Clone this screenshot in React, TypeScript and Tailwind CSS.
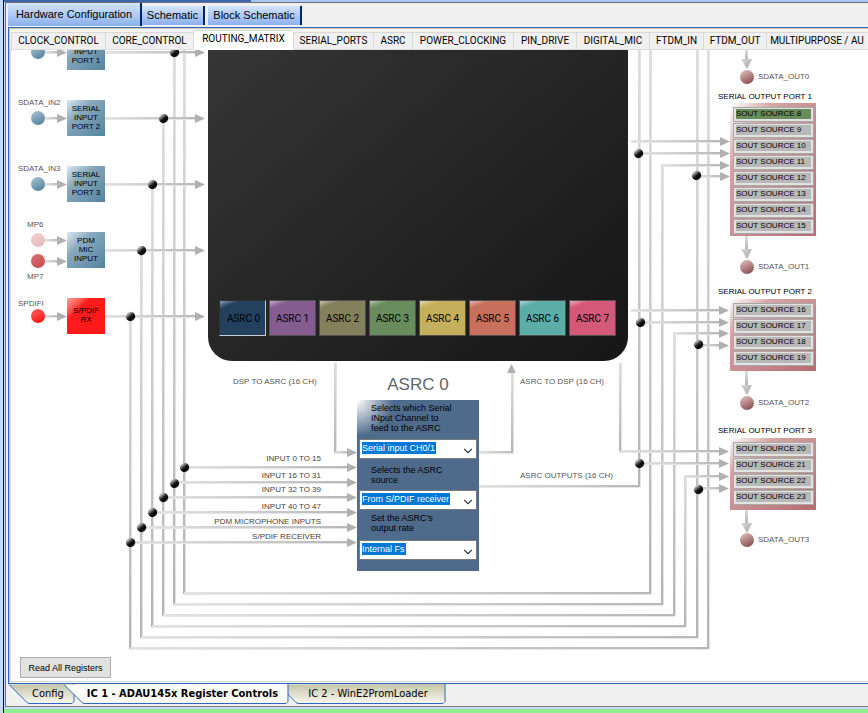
import { useState } from 'react'
import { ChevronDown } from 'lucide-react'
import clsx from 'clsx'

const topTabs = ['Hardware Configuration', 'Schematic', 'Block Schematic']

const pageTabs = [
  { name: 'CLOCK_CONTROL', width: 'w-[94px]' },
  { name: 'CORE_CONTROL', width: 'w-[88px]' },
  { name: 'ROUTING_MATRIX', width: 'w-[100px]' },
  { name: 'SERIAL_PORTS', width: 'w-[80px]' },
  { name: 'ASRC', width: 'w-[39px]' },
  { name: 'POWER_CLOCKING', width: 'w-[101px]' },
  { name: 'PIN_DRIVE', width: 'w-[63px]' },
  { name: 'DIGITAL_MIC', width: 'w-[73px]' },
  { name: 'FTDM_IN', width: 'w-[54px]' },
  { name: 'FTDM_OUT', width: 'w-[63px]' },
  { name: 'MULTIPURPOSE / AU', width: 'w-[101px]' }
]

const chipTabs = [
  { name: 'Config', width: 66 },
  { name: 'IC 1 - ADAU145x Register Controls', width: 225 },
  { name: 'IC 2 - WinE2PromLoader', width: 168 }
]

const inputs = [
  { lines: ['SERIAL', 'INPUT', 'PORT 1'], y: 34, red: false },
  { lines: ['SERIAL', 'INPUT', 'PORT 2'], y: 100, red: false },
  { lines: ['SERIAL', 'INPUT', 'PORT 3'], y: 166, red: false },
  { lines: ['PDM', 'MIC', 'INPUT'], y: 232, red: false },
  { lines: ['S/PDIF', 'RX'], y: 298, red: true }
]

const labels = [
  { text: 'SDATA_IN2', x: 18, y: 97 },
  { text: 'SDATA_IN3', x: 18, y: 163 },
  { text: 'MP6', x: 27, y: 219 },
  { text: 'MP7', x: 27, y: 271 },
  { text: 'SPDIFI', x: 18, y: 298 },
  { text: 'SDATA_OUT0', x: 758, y: 71 },
  { text: 'SDATA_OUT1', x: 758, y: 261 },
  { text: 'SDATA_OUT2', x: 758, y: 397 },
  { text: 'SDATA_OUT3', x: 758, y: 534 },
  { text: 'DSP TO ASRC (16 CH)', x: 233, y: 376 },
  { text: 'ASRC TO DSP (16 CH)', x: 520, y: 376 },
  { text: 'ASRC OUTPUTS (16 CH)', x: 520, y: 470 }
]

const sourceLabels = [
  { text: 'INPUT 0 TO 15', y: 453 },
  { text: 'INPUT 16 TO 31', y: 470 },
  { text: 'INPUT 32 TO 39', y: 484 },
  { text: 'INPUT 40 TO 47', y: 501 },
  { text: 'PDM MICROPHONE INPUTS', y: 516 },
  { text: 'S/PDIF RECEIVER', y: 531 }
]

const asrcColors = [
  'bg-[#24405f]',
  'bg-[#845c90]',
  'bg-[#84805c]',
  'bg-[#688c5c]',
  'bg-[#c4b05c]',
  'bg-[#c8705c]',
  'bg-[#5caca8]',
  'bg-[#d45878]'
]

const outputs = [
  { port: 1, titleY: 91, y: 103, first: 8, count: 8 },
  { port: 2, titleY: 286, y: 299, first: 16, count: 4 },
  { port: 3, titleY: 425, y: 438, first: 20, count: 4 }
]

// x, top, bottom
const verticals = [
  [130, 316, 649], [141, 250, 638], [152, 184, 627], [163, 118, 616], [174, 50, 605], [184, 50, 594],
  [639, 50, 487], [650, 50, 594], [662, 164, 605], [674, 332, 616], [685, 475, 627], [697, 50, 638], [708, 50, 649],
  [335, 363, 453], [512, 372, 453], [620, 363, 452]
]

// y, left, right
const horizontals = [
  [593, 184, 651], [604, 174, 663], [615, 163, 675], [626, 152, 686], [637, 141, 698], [648, 130, 709],
  [452, 479, 513], [486, 479, 640]
]

// y, left, tip
const arrows = [
  [52, 45, 67], [118, 45, 67], [184, 45, 67], [240, 45, 67], [261, 45, 67], [316, 45, 67],
  [52, 105, 205], [118, 105, 205], [184, 105, 205], [250, 105, 205], [316, 105, 205],
  [452, 335, 357], [467, 184, 357], [482, 174, 357], [497, 163, 357], [512, 152, 357], [527, 141, 357], [542, 130, 357],
  [141, 631, 730], [153, 639, 730], [165, 662, 730], [176, 697, 730],
  [310, 631, 729], [322, 641, 729], [333, 674, 729], [345, 698, 729],
  [451, 620, 729], [463, 640, 729], [476, 685, 729], [488, 698, 729]
]

const downArrows = [[50, 68], [236, 258], [371, 394], [510, 532]]

const junctions = [
  [174, 52], [163, 118], [152, 184], [141, 250], [130, 316],
  [184, 467], [174, 483], [163, 497], [152, 512], [141, 527], [130, 542],
  [638, 153], [696, 175], [640, 322], [698, 344], [639, 463], [698, 489]
]

const balls = [
  { x: 38, y: 52, fill: 'url(#blueBall)' },
  { x: 38, y: 118, fill: 'url(#blueBall)' },
  { x: 38, y: 184, fill: 'url(#blueBall)' },
  { x: 38, y: 240, fill: 'url(#paleBall)' },
  { x: 38, y: 261, fill: 'url(#roseBall)' },
  { x: 38, y: 316, fill: 'url(#redBall)' },
  { x: 747, y: 77, fill: 'url(#outBall)' },
  { x: 747, y: 267, fill: 'url(#outBall)' },
  { x: 747, y: 403, fill: 'url(#outBall)' },
  { x: 747, y: 540, fill: 'url(#outBall)' }
]

function Ball({ id, from, to }: { id: string; from: string; to: string }) {
  return (
    <linearGradient id={id} x1="0.2" y1="0" x2="0.7" y2="1">
      <stop offset="0" stopColor={from} />
      <stop offset="1" stopColor={to} />
    </linearGradient>
  )
}

function Wires() {
  return (
    <svg className="absolute left-0 top-0" width="868" height="690" aria-hidden="true">
      <defs>
        <linearGradient id="down" x1="0" y1="0" x2="0" y2="1">
          <stop offset="0" stopColor="#dedede" />
          <stop offset="1" stopColor="#b4b4b4" />
        </linearGradient>
        <linearGradient id="across" x1="0" y1="0" x2="1" y2="0">
          <stop offset="0" stopColor="#e2e2e2" />
          <stop offset="1" stopColor="#b8b8b8" />
        </linearGradient>
        <linearGradient id="head" x1="0" y1="0" x2="1" y2="1">
          <stop offset="0" stopColor="#dcdcdc" />
          <stop offset="1" stopColor="#a0a0a0" />
        </linearGradient>
        <linearGradient id="dot" x1="0.15" y1="0.1" x2="0.8" y2="0.9">
          <stop offset="0" stopColor="#f0f0f0" />
          <stop offset="0.5" stopColor="#202020" />
          <stop offset="0.75" stopColor="#000000" />
          <stop offset="1" stopColor="#404040" />
        </linearGradient>
        <Ball id="blueBall" from="#a6c0d0" to="#5484a0" />
        <Ball id="paleBall" from="#f0d0d0" to="#e4bcbc" />
        <Ball id="roseBall" from="#d87070" to="#c84c50" />
        <Ball id="redBall" from="#ff6060" to="#ff1010" />
        <Ball id="outBall" from="#dcbcbc" to="#8c4c50" />
      </defs>
      {verticals.map(([x, top, bottom]) => (
        <g key={x}>
          <rect x={x - 1} y={top} width="2" height={bottom - top} fill="url(#down)" />
          <rect x={x + 1} y={top} width="1" height={bottom - top} fill="#e2e2e2" />
        </g>
      ))}
      {horizontals.map(([y, left, right]) => (
        <g key={y}>
          <rect x={left} y={y - 1} width={right - left} height="2" fill="url(#across)" />
          <rect x={left} y={y + 1} width={right - left} height="1" fill="#e6e6e6" />
        </g>
      ))}
      {arrows.map(([y, left, tip]) => (
        <g key={`${y}-${left}`}>
          <rect x={left} y={y - 1} width={tip - left - 8} height="2" fill="url(#across)" />
          <rect x={left} y={y + 1} width={tip - left - 8} height="1" fill="#e4e4e4" />
          <path d={`M${tip - 10} ${y - 4}L${tip} ${y + 0.5}L${tip - 10} ${y + 5}Z`} fill="#b0b0b0" />
        </g>
      ))}
      {downArrows.map(([top, tip]) => (
        <g key={top}>
          <rect x="745" y={top} width="3" height={tip - top - 8} fill="url(#down)" />
          <path d={`M741 ${tip - 9}H752L747 ${tip + 1}Z`} fill="url(#head)" />
        </g>
      ))}
      <path d="M507 373L511.500 364L516 373Z" fill="#b0b0b0" />
      {junctions.map(([x, y]) => (
        <circle key={`${x}-${y}`} cx={x + 0.5} cy={y + 0.5} r="4.7" fill="url(#dot)" />
      ))}
      {balls.map((ball) => (
        <circle key={`${ball.x}-${ball.y}`} cx={ball.x} cy={ball.y} r="7" fill={ball.fill} />
      ))}
    </svg>
  )
}

function PanelSelect({ id, label, options, className }: { id: string; label: string[]; options: string[]; className: string }) {
  return (
    <>
      <label htmlFor={id} className={clsx('flex flex-col justify-center pl-3 leading-[10px] whitespace-nowrap', className)}>
        {label.map((line) => (
          <span key={line}>{line}</span>
        ))}
      </label>
      <div className="relative flex h-5 items-start border border-[#7a7a7a] bg-white px-0.5 pt-0.5">
        <select id={id} className="field-sizing-content h-3 appearance-none bg-[#0078d7] pr-px leading-3 text-white outline-none">
          {options.map((option) => (
            <option key={option}>{option}</option>
          ))}
        </select>
        <ChevronDown className="pointer-events-none absolute right-px top-1 h-[14px] w-[14px] text-[#404040]" />
      </div>
    </>
  )
}

function OutputPort({ first, count }: { first: number; count: number }) {
  return (
    <div
      className={clsx(
        'flex w-[86px] flex-col gap-px bg-linear-to-br from-white via-[#d4a4a4] via-25% to-[#b46c70] pl-[3px] pr-0.5 pt-1',
        count > 4 ? 'pb-0.5' : 'pb-[5px]'
      )}
    >
      {Array.from({ length: count }, (_, i) => first + i).map((n) => (
        <button key={n} className="flex h-[15px] items-start border border-[#a8a8a8] bg-[#e2e2e2] px-0.5 pt-px text-left text-[8px] text-black">
          <span className={clsx('h-[10px] flex-1 leading-[10px] whitespace-nowrap', n === 8 ? 'bg-[#688c5c]' : 'bg-[#b8b8b8]')}>
            SOUT SOURCE {n}
          </span>
        </button>
      ))}
    </div>
  )
}

function RoutingMatrix() {
  const [asrc, setAsrc] = useState(0)

  return (
    <div className="relative min-h-[631px] flex-1 overflow-hidden bg-white">
      {/* The drawing is scrolled down a little inside its page */}
      <div className="absolute -left-[11px] -top-[50px] h-[690px] w-[868px] text-[8px] leading-3">
        <Wires />

        {inputs.map((input) => (
          <div
            key={input.y}
            style={{ top: input.y }}
            className={clsx(
              'absolute left-[67px] flex h-9 w-[38px] flex-col items-center pt-1 leading-[9px]',
              input.red
                ? 'bg-linear-to-br from-[#ff9c9c] via-[#ff1c1c] via-30% to-[#ff1818]'
                : 'bg-linear-to-br from-[#dce8f0] via-[#86a8bc] via-35% to-[#5484a0]'
            )}
          >
            <div className={clsx('flex flex-col items-center', input.red && 'pt-1')}>
              {input.lines.map((line) => (
                <span key={line}>{line}</span>
              ))}
            </div>
          </div>
        ))}

        {labels.map((label) => (
          <span key={label.text} style={{ left: label.x, top: label.y }} className="absolute whitespace-nowrap text-[#555555]">
            {label.text}
          </span>
        ))}

        {sourceLabels.map((label) => (
          <span key={label.text} style={{ top: label.y }} className="absolute left-[200px] w-[121px] text-right text-[#444444]">
            {label.text}
          </span>
        ))}

        <div className="absolute left-[208px] top-0 flex h-[361px] w-[420px] items-end rounded-b-[24px] bg-linear-to-br from-[#383838] to-[#161616] pb-[25px] pl-[11px]">
          <div className="flex gap-[3px]">
            {asrcColors.map((color, i) => (
              <button
                key={color}
                onClick={() => setAsrc(i)}
                className={clsx(
                  'relative h-9 w-[47px] border pt-0.5 font-[Roboto,sans-serif] text-[10px] text-black',
                  color,
                  i === asrc ? 'border-b-[#c8ccd0] border-l-[#303030] border-r-[#c8ccd0] border-t-[#303030] pl-0.5' : 'border-[#505050]'
                )}
              >
                <span className="absolute left-0 top-0 h-2 w-5 bg-linear-to-br from-white/50 to-transparent to-50%" />
                ASRC {i}
              </button>
            ))}
          </div>
        </div>

        <h2 className="absolute left-[357px] top-[375px] w-[122px] text-center text-[17px] leading-5 text-[#666666]">ASRC {asrc}</h2>

        <div className="absolute left-[357px] top-[400px] w-[122px] bg-[#4f6b8b] bg-[radial-gradient(circle_at_top_left,#ffffff_0,#4f6b8b_36px)] px-0.5 pb-[11px] text-[9px]">
          <PanelSelect
            id="serial-input"
            className="h-[39px] pb-1"
            label={['Selects which Serial', 'INput Channel to', 'feed to the ASRC']}
            options={['Serial input CH0/1', 'Serial input CH2/3']}
          />
          <PanelSelect
            id="source"
            className="h-[31px]"
            label={['Selects the ASRC', 'source']}
            options={['From S/PDIF receiver', 'From serial inputs']}
          />
          <PanelSelect
            id="rate"
            className="h-[30px] pb-1"
            label={["Set the ASRC's", 'output rate']}
            options={['Internal Fs']}
          />
        </div>

        {outputs.map((output) => (
          <div key={output.port}>
            <h3 style={{ top: output.titleY }} className="absolute left-[718px] whitespace-nowrap text-black">
              SERIAL OUTPUT PORT {output.port}
            </h3>
            <div style={{ top: output.y }} className="absolute left-[730px]">
              <OutputPort first={output.first} count={output.count} />
            </div>
          </div>
        ))}

        <button className="absolute left-5 top-[657px] h-[21px] w-[91px] border border-[#adadad] bg-[#e1e1e1] text-[9px] text-black">
          Read All Registers
        </button>
      </div>
    </div>
  )
}

function ChipTab({ name, width, active }: { name: string; width: number; active: boolean }) {
  const outline = `M0 0.5L18 18.5L20 19.5H${width - 3}L${width - 1} 17.5V0`
  return (
    <button
      style={{ width }}
      className={clsx('relative -ml-[11px] h-5 pl-3 text-[11px] leading-4 whitespace-nowrap text-black', active ? 'z-10 font-bold' : '')}
    >
      <svg className="absolute left-0 top-0" width={width} height="20" aria-hidden="true">
        <defs>
          <linearGradient id="chipTab" x1="0" y1="0" x2="0" y2="1">
            <stop offset="0" stopColor="#c4c4a8" />
            <stop offset="1" stopColor="#f8f8f0" />
          </linearGradient>
        </defs>
        <path d={outline} fill={active ? '#fcfaf8' : 'url(#chipTab)'} stroke="#2c68c0" />
      </svg>
      <span className="relative">{name}</span>
    </button>
  )
}

export default function App() {
  return (
    <div className="flex min-h-screen flex-col overflow-hidden bg-[#c5dcfc] pl-[3px] font-['Liberation_Sans',Arial,sans-serif]">
      <div className="flex flex-1 flex-col border-b border-l border-[#000080]">
        <div className="flex h-0.5">
          <div className="w-[247px] bg-[#3c66b0]" />
          <div className="flex-1 bg-[#a8c8f8]" />
        </div>
        <div className="ml-px flex flex-1 flex-col border-b border-l border-t border-b-[#808080] border-l-[#707070] border-t-[#707070] bg-[#f0f0f0] pl-0.5">
          <nav className="flex h-6 items-start gap-[3px]">
            {topTabs.map((tab, i) => (
              <button
                key={tab}
                className={clsx(
                  'border-r-2 border-[#00256c] bg-linear-to-b from-[#d4e4fc] to-[#8cb0ec] text-[11px] whitespace-nowrap text-black',
                  i === 0 ? 'h-[23px] w-[134px]' : 'mt-[3px] h-[19px]',
                  i === 1 && '-ml-[3px] w-[63px]',
                  i === 2 && 'w-[94px]'
                )}
              >
                {tab}
              </button>
            ))}
          </nav>
          <div className="flex flex-1 flex-col border-b border-l border-t border-[#2c68c0] bg-[#f4f4f4] pb-px">
            <div className="flex flex-1 flex-col border-l border-t border-[#d0c8b0] pt-0.5">
              <nav className="flex h-[19px] items-end border-b border-[#dcdcdc] pl-px">
                {pageTabs.map((tab) => {
                  const active = tab.name === 'ROUTING_MATRIX'
                  return (
                    <button
                      key={tab.name}
                      className={clsx(
                        'shrink-0 border-l border-t border-[#d9d9d9] font-[Roboto,sans-serif] text-[10px] leading-4 whitespace-nowrap text-black',
                        tab.width,
                        active ? '-mb-px h-5 bg-white pb-1' : 'h-[17px] bg-[#f0f0f0]'
                      )}
                    >
                      {tab.name}
                    </button>
                  )
                })}
              </nav>
              <div className="flex flex-1 flex-col border-b border-l border-[#dcdcdc]">
                <RoutingMatrix />
              </div>
            </div>
          </div>
          <nav className="flex h-[22px] items-start pl-3 font-['DejaVu_Sans_Condensed','DejaVu_Sans',sans-serif]">
            {chipTabs.map((tab, i) => (
              <ChipTab key={tab.name} name={tab.name} width={tab.width} active={i === 1} />
            ))}
          </nav>
        </div>
        <div className="mt-0.5 h-1 bg-[#90ee90]" />
      </div>
    </div>
  )
}
